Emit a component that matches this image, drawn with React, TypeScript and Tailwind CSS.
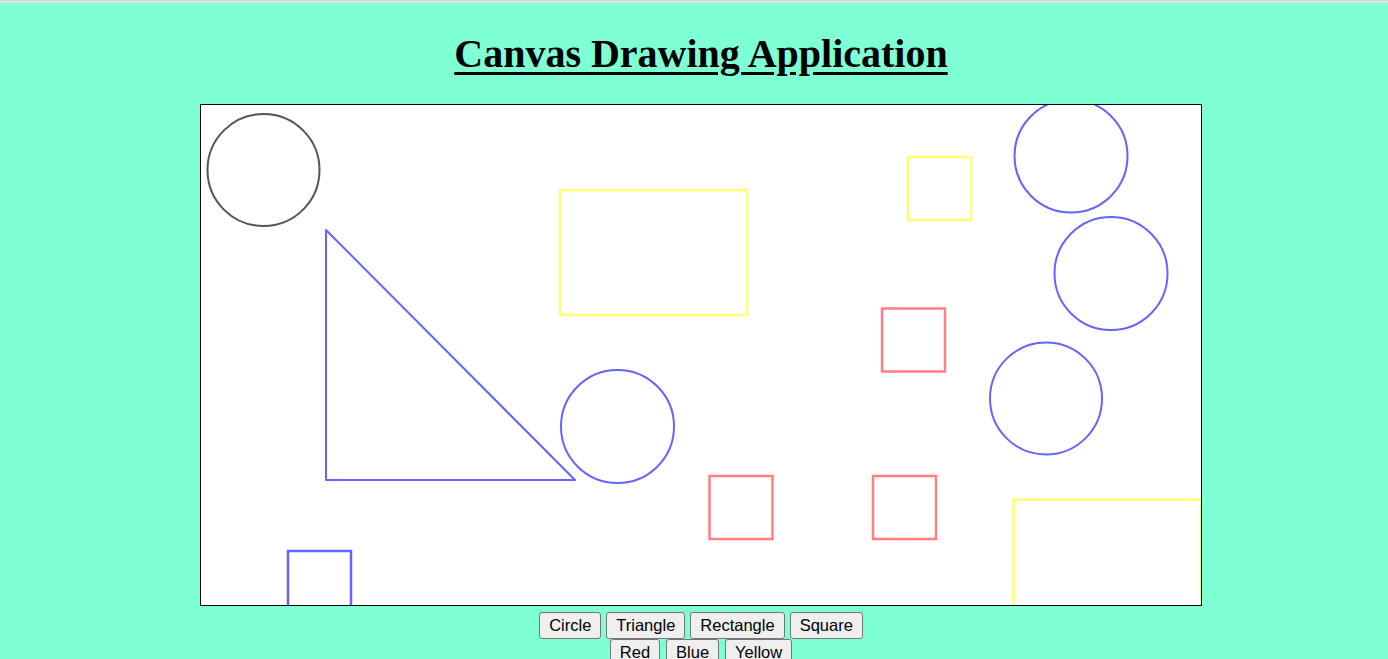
import React from "react";

const BLUE = "#6464ff";
const RED = "#ff8080";
const YELLOW = "#ffff73";

const circles = [
  { cx: 62.5, cy: 65, r: 56, color: "#555555" },
  { cx: 416.5, cy: 321.5, r: 56.5, color: BLUE },
  { cx: 870, cy: 51, r: 56.5, color: BLUE },
  { cx: 910, cy: 168.5, r: 56.5, color: BLUE },
  { cx: 845, cy: 293.5, r: 56, color: BLUE },
];

const rects = [
  { x: 359, y: 85, w: 187, h: 125, color: YELLOW },
  { x: 707, y: 52, w: 63, h: 63, color: YELLOW },
  { x: 681, y: 203.5, w: 63, h: 63, color: RED },
  { x: 508.5, y: 371, w: 63, h: 63, color: RED },
  { x: 672, y: 371, w: 63, h: 63, color: RED },
  { x: 812.5, y: 394.5, w: 187.5, h: 125, color: YELLOW },
  { x: 87, y: 446, w: 63, h: 63, color: BLUE },
];

const shapeButtons = ["Circle", "Triangle", "Rectangle", "Square"];
const colorButtons = ["Red", "Blue", "Yellow"];

const Btn = ({ label }: { label: string }) => (
  <button className="h-[27px] px-[9px] bg-[#efefef] border border-[#767676] rounded-[3px] text-[16.5px] leading-none text-black font-['Liberation_Sans',Arial,sans-serif]">
    {label}
  </button>
);

const App = () => {
  return (
    <div className="min-h-[659px] bg-[#7fffd4] overflow-hidden">
      <div className="h-[3px] bg-gradient-to-b from-[#d2d2d2] to-[#ececec]" />
      <div className="pl-[14px] flex flex-col items-center">
        <h1 className="mt-[28px] mb-[27px] text-[40px] leading-[46px] font-bold underline decoration-[3px] underline-offset-[5px] text-black font-['Liberation_Serif','Times_New_Roman',serif]">
          Canvas Drawing Application
        </h1>
        <div className="w-[1002px] h-[502px] border border-black bg-white">
          <svg width="1000" height="500" viewBox="0 0 1000 500" className="block">
            {circles.map((c, i) => (
              <circle key={i} cx={c.cx} cy={c.cy} r={c.r} fill="none" stroke={c.color} strokeWidth={2} />
            ))}
            <polygon points="125,125 125,375 374,375" fill="none" stroke={BLUE} strokeWidth={2} strokeLinejoin="round" />
            {rects.map((r, i) => (
              <rect key={i} x={r.x} y={r.y} width={r.w} height={r.h} fill="none" stroke={r.color} strokeWidth={2.5} />
            ))}
          </svg>
        </div>
        <div className="mt-[6px] flex gap-[5px]">
          {shapeButtons.map((b) => (
            <Btn key={b} label={b} />
          ))}
        </div>
        <div className="flex gap-[6px]">
          {colorButtons.map((b) => (
            <Btn key={b} label={b} />
          ))}
        </div>
      </div>
    </div>
  );
};

export default App;
